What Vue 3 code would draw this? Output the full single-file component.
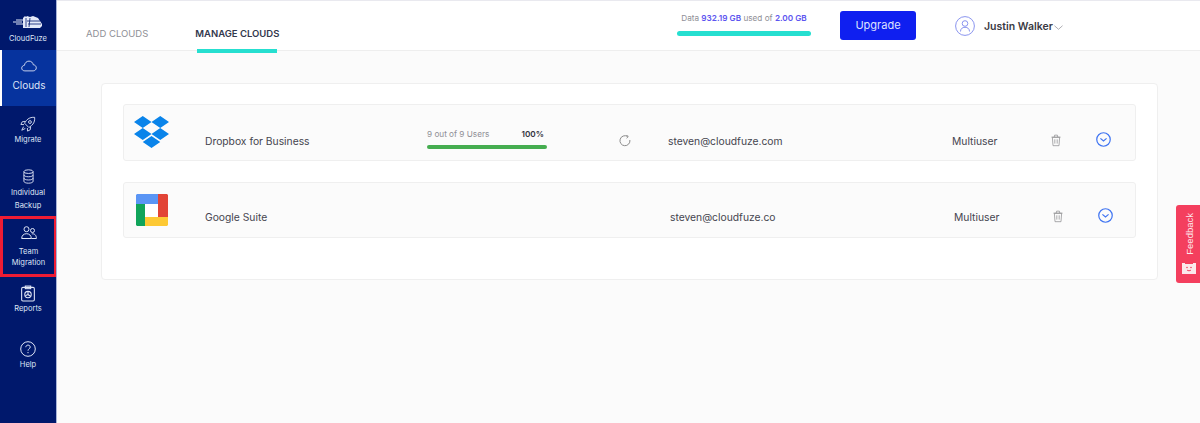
<script setup>
const navItems = [
  { id: 'clouds', label: ['Clouds'], icon: 'cloud' },
  { id: 'migrate', label: ['Migrate'], icon: 'rocket' },
  { id: 'backup', label: ['Individual', 'Backup'], icon: 'db' },
  { id: 'team', label: ['Team', 'Migration'], icon: 'team' },
  { id: 'reports', label: ['Reports'], icon: 'report' },
  { id: 'help', label: ['Help'], icon: 'help' },
]
</script>

<template>
  <div class="page">
    <aside class="side">
      <div class="brand">
        <svg class="brand-mark" viewBox="0 0 30 14" width="30" height="14">
          <path d="M0 7h9M3 5h7M3 9h7" stroke="#dfe6f7" stroke-width="1" fill="none" />
          <path d="M10 3 12 1l1 1 1-1 3 1 3-1 5 2 2 3 2 3v2l-2 2H10z" fill="#e4e9f8" />
          <path d="M13 3v9M17 3l-1 9M14 6h13M15 9h13" stroke="#00186c" stroke-width=".8" fill="none" />
        </svg>
        <span>CloudFuze</span>
      </div>
      <div v-for="n in navItems" :key="n.id" class="nav" :class="'nav-' + n.id">
        <svg v-if="n.icon === 'cloud'" viewBox="0 0 18 13" width="16" height="12" class="ic">
          <path d="M4.3 12C2.2 12 .8 10.6.8 8.9c0-1.7 1.3-3 3-3.1C4.3 3 6.300 1 9 1c2.500 0 4.400 1.700 4.800 4.100 2 .2 3.400 1.700 3.400 3.500 0 1.900-1.500 3.400-3.500 3.400z" />
        </svg>
        <svg v-else-if="n.icon === 'rocket'" viewBox="0 0 18 18" width="16" height="16" class="ic">
          <path d="M16.500 1.500c-4-.4-7.200 1-9.300 3.600L5 8l5 5 2.900-2.200c2.600-2.100 4-5.300 3.600-9.300z" />
          <circle cx="11.200" cy="6.800" r="1.600" />
          <path d="M6 6 2.500 6.500 1 9.500l3.500.2M12 12l-.5 3.500-3 1.500-.2-3.500M4 12l-2 4 4-2" />
        </svg>
        <svg v-else-if="n.icon === 'db'" viewBox="0 0 12 16" width="11" height="15" class="ic">
          <ellipse cx="6" cy="2.700" rx="5" ry="2" />
          <path d="M1 2.700v10.600c0 1.100 2.200 2 5 2s5-.9 5-2V2.700M1 6.300c0 1.100 2.200 2 5 2s5-.9 5-2M1 9.800c0 1.100 2.200 2 5 2s5-.9 5-2" />
        </svg>
        <svg v-else-if="n.icon === 'team'" viewBox="0 0 16 13" width="16" height="13" class="ic">
          <circle cx="5.500" cy="3.200" r="2.500" />
          <circle cx="11.500" cy="4.500" r="2" />
          <path d="M.7 12.500c0-3 2-4.800 4.800-4.800s4.800 1.800 4.800 4.800zM10.800 7.900c2.700-.5 4.600 1.200 4.600 4.600h-5" />
        </svg>
        <svg v-else-if="n.icon === 'report'" viewBox="0 0 13 15" width="14" height="17" class="ic">
          <rect x=".6" y="1.800" width="11.800" height="12.600" rx="1.200" />
          <rect x="4" y=".6" width="5" height="2.400" />
          <circle cx="6.500" cy="8.500" r="3" />
          <path d="M6.500 5.500v3l2.500 1.500M6.500 8.500 4 9.500" />
        </svg>
        <svg v-else viewBox="0 0 16 16" width="16" height="16" class="ic">
          <circle cx="8" cy="8" r="7.300" />
          <path d="M5.800 6.200C5.900 4.900 6.800 4.100 8 4.100c1.300 0 2.200.8 2.200 2 0 1.700-2.200 1.700-2.200 3.600M8 11v1.200" />
        </svg>
        <span v-for="l in n.label" :key="l" class="nav-line">{{ l }}</span>
      </div>
    </aside>

    <div class="main">
      <header class="top">
        <nav class="tabs">
          <span class="tab">ADD CLOUDS</span>
          <span class="tab tab-on">MANAGE CLOUDS</span>
        </nav>
        <div class="quota">
          <div class="quota-text">Data <b>932.19 GB</b> used of <b>2.00 GB</b></div>
          <div class="quota-bar"></div>
        </div>
        <button class="upgrade">Upgrade</button>
        <svg class="avatar" viewBox="0 0 20 20" width="20" height="20">
          <circle cx="10" cy="10" r="9.400" />
          <circle cx="10" cy="7.500" r="2.800" />
          <path d="M5.500 15.500c0-2.700 1.800-4.200 4.500-4.200s4.500 1.500 4.500 4.200" />
        </svg>
        <span class="user">Justin Walker</span>
        <svg class="caret" viewBox="0 0 10 5" width="9" height="5"><path d="M.5.500 5 4.500 9.500.500" /></svg>
      </header>

      <section class="content">
        <div class="panel">
          <div class="row row-a">
            <svg class="logo" viewBox="0 1.800 24 20.400" width="35" height="32" preserveAspectRatio="none">
              <path fill="#0a84ea" d="M6 1.807 0 5.629l6 3.822 6.001-3.822L6 1.807zM18 1.807l-6 3.822 6 3.822 6-3.822-6-3.822zM0 13.274l6 3.822 6.001-3.822L6 9.452l-6 3.822zM18 9.452l-6 3.822 6 3.822 6-3.822-6-3.822zM6 18.371l6.001 3.822 6-3.822-6-3.822L6 18.371z" />
            </svg>
            <span class="name cell">Dropbox for Business</span>
            <div class="progress">
              <div class="progress-text"><span>9 out of 9 Users</span><b>100%</b></div>
              <div class="progress-bar"></div>
            </div>
            <svg class="refresh cell-icon" viewBox="0 0 12 12" width="12" height="12">
              <path d="M8.500 1.400A5 5 0 1 0 10.900 5" />
              <path d="M7.200 0 9.300 1.500 7.600 3.200" />
            </svg>
            <span class="email cell">steven@cloudfuze.com</span>
            <span class="type cell">Multiuser</span>
            <svg class="trash cell-icon" viewBox="0 0 11 13" width="10" height="13">
              <path d="M1.500 3h8l-.7 9.200H2.200zM.5 2.800h10M3.600 2.600l.4-2h3l.4 2M4.200 5.200v4.700M6.800 5.200v4.700" />
            </svg>
            <svg class="more cell-icon" viewBox="0 0 16 16" width="15" height="15">
              <circle cx="8" cy="8" r="7.200" />
              <path d="M4.700 6.800 8 9.500l3.300-2.700" />
            </svg>
          </div>
          <div class="row row-b">
            <svg class="logo" viewBox="0 0 32 32" width="32" height="32">
              <rect width="32" height="32" rx="1.500" fill="#fff" />
              <path fill="#5a95f5" d="M1 0h21v10H0V1z" />
              <path fill="#e24436" d="M22 0h9l1 1v22H22z" />
              <path fill="#fdc934" d="M9 23h23v8l-1 1H9z" />
              <path fill="#10a45a" d="M0 10h9v22H1l-1-1z" />
            </svg>
            <span class="name cell">Google Suite</span>
            <span></span>
            <span></span>
            <span class="email cell">steven@cloudfuze.co</span>
            <span class="type cell">Multiuser</span>
            <svg class="trash cell-icon" viewBox="0 0 11 13" width="10" height="13">
              <path d="M1.500 3h8l-.7 9.200H2.200zM.5 2.800h10M3.600 2.600l.4-2h3l.4 2M4.200 5.200v4.700M6.800 5.200v4.700" />
            </svg>
            <svg class="more cell-icon" viewBox="0 0 16 16" width="15" height="15">
              <circle cx="8" cy="8" r="7.200" />
              <path d="M4.700 6.800 8 9.500l3.300-2.700" />
            </svg>
          </div>
        </div>
      </section>
    </div>

    <div class="feedback">
      <span class="feedback-text">Feedback</span>
      <svg viewBox="0 0 14 11" width="14" height="11">
        <path fill="#fbe9ec" d="M0 0h3v1h8V0h3v11H0z" />
        <circle cx="5" cy="4.500" r=".8" fill="#f43f5e" />
        <circle cx="9" cy="4.500" r=".8" fill="#f43f5e" />
        <path d="M5 7c1 1 3 1 4 0" stroke="#f43f5e" fill="none" />
      </svg>
    </div>
  </div>
</template>

<style>
html, body { margin: 0; background: #fbfbfb; }
</style>

<style scoped>
.page {
  position: relative;
  display: flex;
  width: 1200px;
  height: 423px;
  overflow: hidden;
  font-family: Inter, "Open Sans", sans-serif;
  color: #3f3f4a;
}
.side {
  flex: none;
  box-sizing: border-box;
  width: 57px;
  border-right: 1px solid #a8b4d8;
  background: #00186c;
  color: #dfe5f6;
  display: flex;
  flex-direction: column;
  align-items: stretch;
  text-align: center;
  font-size: 7.500px;
}
.brand {
  height: 50px;
  box-sizing: border-box;
  padding-top: 15px;
  display: flex;
  flex-direction: column;
  align-items: center;
  gap: 4px;
  font-weight: 400;
  line-height: 11px;
}
.brand-mark { display: block; }
.nav {
  display: flex;
  flex-direction: column;
  align-items: center;
  box-sizing: border-box;
  font-weight: 400;
  line-height: 13px;
}
.ic {
  flex: none;
  fill: none;
  stroke: #dfe5f6;
  stroke-width: 1;
}
.nav-line { display: block; }
.nav-clouds {
  height: 56px;
  padding-top: 10px;
  background: #06339e;
  border-left: 2px solid #fff;
  font-size: 10px;
  line-height: 16px;
}
.nav-clouds .ic { margin-bottom: 5px; }
.nav-migrate { height: 56px; padding-top: 10px; }
.nav-migrate .ic { margin-bottom: 1px; }
.nav-backup { height: 54px; padding-top: 7px; }
.nav-backup .ic { margin-bottom: 2px; }
.nav-team {
  height: 61px;
  padding-top: 7px;
  border: 3px solid #ee1c34;
  border-right-width: 2px;
}
.nav-team .ic { margin-bottom: 7px; }
.nav-team .nav-line { line-height: 11px; }
.nav-reports { height: 56px; padding-top: 8px; }
.nav-help { padding-top: 8px; }
.nav-help .ic { margin-bottom: 1px; }

.main { flex: 1; min-width: 0; display: flex; flex-direction: column; }
.top {
  flex: none;
  box-sizing: border-box;
  height: 51px;
  background: #fff;
  border-top: 1px solid #e9e9ef;
  border-bottom: 1px solid #eeeeee;
  display: flex;
  align-items: flex-start;
  padding-left: 29px;
}
.tabs { display: flex; gap: 47px; width: 591px; flex: none; }
.tab {
  display: block;
  height: 52px;
  box-sizing: border-box;
  padding-top: 27px;
  font-size: 9.500px;
  line-height: 12px;
  color: #8f8f96;
}
.tab-on {
  position: relative;
  color: #33384d;
  font-weight: 600;
}
.tab-on::after {
  content: "";
  position: absolute;
  left: 2px;
  right: 2px;
  bottom: 0;
  height: 4px;
  background: #26dfd0;
}
.quota { width: 134px; padding-top: 11px; flex: none; }
.quota-text { font-size: 8.200px; line-height: 13px; color: #8f8f96; text-align: center; white-space: nowrap; }
.quota-text b { color: #5d55f0; font-weight: 600; }
.quota-bar { height: 5px; margin-top: 6px; border-radius: 3px; background: #26dfd0; }
.upgrade {
  flex: none;
  width: 76px;
  height: 29px;
  margin: 10px 0 0 29px;
  padding: 0;
  border: 0;
  border-radius: 3px;
  background: #0f1ff0;
  color: #dfe2ff;
  font: 400 11px/29px Inter, sans-serif;
}
.avatar {
  flex: none;
  margin: 15px 0 0 39px;
  fill: none;
  stroke: #6c78ea;
  stroke-width: .8;
}
.user { margin: 19px 0 0 9px; font-size: 10.500px; line-height: 13px; font-weight: 600; color: #3a3a44; white-space: nowrap; }
.caret { margin: 24px 0 0 1px; fill: none; stroke: #8f8f96; stroke-width: .8; }

.content { flex: 1; padding: 32px 42px 0 44px; }
.panel {
  box-sizing: border-box;
  height: 197px;
  padding: 20px 21px 0;
  background: #fff;
  border: 1px solid #efefef;
  border-radius: 4px;
  display: flex;
  flex-direction: column;
  gap: 21px;
}
.row {
  box-sizing: border-box;
  display: grid;
  align-items: center;
  padding: 11px 0 0 10px;
  background: #fbfbfb;
  border: 1px solid #efefef;
  border-radius: 3px;
  font-size: 10.300px;
}
.row-a {
  height: 57px;
  grid-template-columns: 71px 222px 192px 49px 284px 99px 45px 16px;
}
.row-b {
  height: 56px;
  padding-left: 12px;
  grid-template-columns: 69px 222px 192px 51px 284px 99px 45px 16px;
}
.logo { align-self: start; display: block; }
.cell { padding-top: 6px; white-space: nowrap; color: #45454f; }
.row-b .cell { padding-top: 3px; }
.cell-icon { fill: none; }
.progress { width: 120px; }
.progress-text { display: flex; justify-content: space-between; padding-right: 3px; font-size: 8.200px; line-height: 12px; color: #8f8f96; }
.progress-text b { color: #33333c; font-weight: 600; }
.progress-bar { height: 4px; margin-top: 5px; border-radius: 2px; background: #45ad50; }
.refresh { margin-top: 6px; stroke: #8a8a8a; stroke-width: 1; }
.trash { margin-top: 5px; stroke: #8c8c90; stroke-width: .8; }
.more { margin-top: 3px; stroke: #3f74f2; stroke-width: 1.300; }
.row-b .trash { margin-top: 2px; }
.row-b .more { margin-top: 0; }

.feedback {
  position: absolute;
  right: 0;
  top: 205px;
  box-sizing: border-box;
  width: 24px;
  height: 78px;
  padding: 8px 0 0;
  background: #f43f5e;
  border-radius: 3px 0 0 3px;
  display: flex;
  flex-direction: column;
  align-items: center;
  gap: 8px;
}
.feedback-text {
  writing-mode: vertical-rl;
  transform: rotate(180deg);
  margin-left: 4px;
  font-size: 9.500px;
  line-height: 12px;
  color: #fde8ec;
  font-family: "Liberation Sans", sans-serif;
}
.feedback svg { margin-left: 2px; }
</style>
